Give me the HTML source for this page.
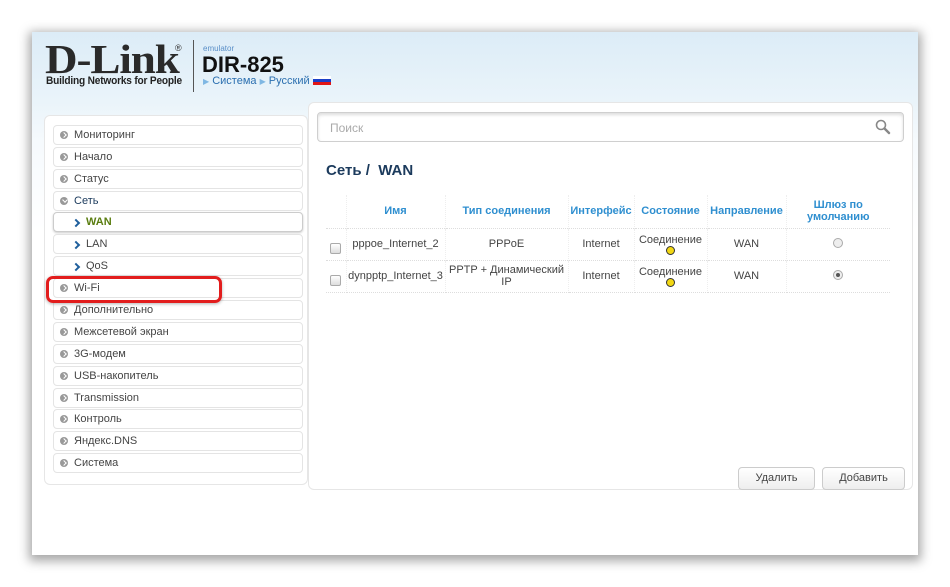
<!DOCTYPE html>
<html><head><meta charset="utf-8">
<style>
*{box-sizing:border-box;margin:0;padding:0}
body{width:950px;height:587px;background:#fff;font-family:"Liberation Sans",Arial,sans-serif;position:relative;overflow:hidden}
#win{position:absolute;left:32px;top:32px;width:886px;height:523px;background:linear-gradient(#dcecf7 0px,#eaf4fa 70px,#f6fafd 110px,#fff 200px,#fff);box-shadow:0 3px 10px 3px rgba(0,0,0,.35)}
.logo{position:absolute;left:45px;top:38px;font-family:"Liberation Serif",serif;font-weight:bold;font-size:41px;color:#2a2a2a;letter-spacing:-1px;line-height:42px;transform:scaleX(1.1);transform-origin:left top}
.reg{position:absolute;left:175px;top:43px;font-size:9px;color:#333}
.tag{position:absolute;left:46px;top:75px;font-size:11px;font-weight:bold;color:#222;letter-spacing:-.2px;transform:scaleX(.92);transform-origin:left top;white-space:nowrap}
.vline{position:absolute;left:193px;top:40px;width:1px;height:52px;background:#555}
.emu{position:absolute;left:203px;top:44px;font-size:8px;color:#5a8fc8}
.dir{position:absolute;left:202px;top:52px;font-size:22px;font-weight:bold;color:#111}
.nav{position:absolute;left:203px;top:75px;font-size:11px;color:#2b6fb0}
.nav i{font-style:normal;color:#7fb7e3;font-size:8px}
.flag{display:inline-block;width:18px;height:9px;vertical-align:-1px;background:linear-gradient(#fff 0 33%,#1a3fc8 33% 66%,#e01515 66%)}
#side{position:absolute;left:44px;top:115px;width:264px;height:370px;background:#fff;border:1px solid #e6e6e6;border-radius:6px}
.it{position:absolute;left:53px;width:250px;height:20px;border:1px solid #e4e4e4;border-radius:4px;background:#fff;font-size:11px;color:#444;line-height:19px;padding-left:20px}
.it::before{content:"";position:absolute;left:6px;top:5px;width:8px;height:8px;border-radius:50%;background:#999}
.it::after{content:"";position:absolute;left:8px;top:7px;width:3px;height:3px;border-top:1.3px solid #fff;border-right:1.3px solid #fff;transform:rotate(45deg)}
.it.net::after{left:8.5px;top:6px;transform:rotate(135deg)}
.it.sub{padding-left:32px}
.it.sub::before{display:none}
.it.sub::after{left:19px;top:7px;width:4px;height:4px;border-top:2px solid #1f5f9c;border-right:2px solid #1f5f9c}
.it.wan{color:#5a7d10;font-weight:bold;border-color:#ccc;box-shadow:0 1px 2px #ccc}
.it.net{color:#1b3a5c}
#main{position:absolute;left:308px;top:102px;width:605px;height:388px;background:#fff;border:1px solid #e6e6e6;border-radius:6px}
.search{position:absolute;left:317px;top:112px;width:587px;height:30px;border:1px solid #cfcfcf;border-radius:4px;box-shadow:inset 0 2px 3px #ddd;font-size:12px;color:#aaa;padding:8px 12px}
.title{position:absolute;left:326px;top:162px;font-size:15px;font-weight:bold;color:#1b3a5c}
table{position:absolute;left:326px;top:195px;border-collapse:collapse;font-size:11px;color:#444}
td,th{text-align:center;border-right:1px dotted #eee;padding:0}
th{color:#2f8fd0;font-weight:bold;height:33px}
tr.r td{border-top:1px dotted #ddd;height:32px}
tr.r:last-child td{border-bottom:1px dotted #ddd}
.cb{display:inline-block;width:11px;height:11px;border:1px solid #aaa;border-radius:2px;background:linear-gradient(#fff,#ddd);margin-top:12px}
.dot{display:block;margin:0 auto;width:9px;height:9px;border-radius:50%;background:#f2d713;border:1px solid #333}
.rad{display:inline-block;width:10px;height:10px;border-radius:50%;border:1px solid #aaa;background:#eee;position:relative}
.rad.on::after{content:"";position:absolute;left:2px;top:2px;width:4px;height:4px;border-radius:50%;background:#555}
.btn{position:absolute;top:467px;height:23px;border:1px solid #ccc;border-radius:4px;background:linear-gradient(#fff,#eee);font-size:11px;color:#444;text-align:center;line-height:21px}
.hl{position:absolute;left:46px;top:276px;width:176px;height:27px;border:3px solid #e21d1d;border-radius:7px;box-shadow:0 1px 3px rgba(0,0,0,.3)}
</style></head><body>
<div id="win"></div>
<div class="logo">D-Link</div>
<div class="reg">®</div>
<div class="tag">Building Networks for People</div>
<div class="vline"></div>
<div class="emu">emulator</div>
<div class="dir">DIR-825</div>
<div class="nav"><i>▶</i> Система <i>▶</i> Русский <span class="flag"></span></div>
<div id="side"></div>
<div class="it" style="top:125px">Мониторинг</div>
<div class="it" style="top:147px">Начало</div>
<div class="it" style="top:169px">Статус</div>
<div class="it net" style="top:191px">Сеть</div>
<div class="it sub wan" style="top:212px">WAN</div>
<div class="it sub" style="top:234px">LAN</div>
<div class="it sub" style="top:256px">QoS</div>
<div class="it" style="top:278px">Wi-Fi</div>
<div class="it" style="top:300px">Дополнительно</div>
<div class="it" style="top:322px">Межсетевой экран</div>
<div class="it" style="top:344px">3G-модем</div>
<div class="it" style="top:366px">USB-накопитель</div>
<div class="it" style="top:388px">Transmission</div>
<div class="it" style="top:409px">Контроль</div>
<div class="it" style="top:431px">Яндекс.DNS</div>
<div class="it" style="top:453px">Система</div>
<div class="hl"></div>
<div id="main"></div>
<div class="search">Поиск
<svg style="position:absolute;right:12px;top:6px" width="16" height="16" viewBox="0 0 16 16"><circle cx="6" cy="6" r="4.5" fill="none" stroke="#888" stroke-width="1.6"/><path d="M9.5 9.5L14 14" stroke="#888" stroke-width="2.4" stroke-linecap="round"/></svg></div>
<div class="title">Сеть /&nbsp; WAN</div>
<table>
<tr><th style="width:20px"></th><th style="width:99px">Имя</th><th style="width:123px">Тип соединения</th><th style="width:66px">Интерфейс</th><th style="width:73px">Состояние</th><th style="width:79px">Направление</th><th style="width:104px;border-right:none">Шлюз по<br>умолчанию</th></tr>
<tr class="r"><td><span class="cb"></span></td><td>pppoe_Internet_2</td><td>PPPoE</td><td>Internet</td><td>Соединение<span class="dot"></span></td><td>WAN</td><td style="border-right:none"><span class="rad"></span></td></tr>
<tr class="r"><td><span class="cb"></span></td><td>dynpptp_Internet_3</td><td>PPTP + Динамический<br>IP</td><td>Internet</td><td>Соединение<span class="dot"></span></td><td>WAN</td><td style="border-right:none"><span class="rad on"></span></td></tr>
</table>
<div class="btn" style="left:738px;width:77px">Удалить</div>
<div class="btn" style="left:822px;width:83px">Добавить</div>
</body></html>
